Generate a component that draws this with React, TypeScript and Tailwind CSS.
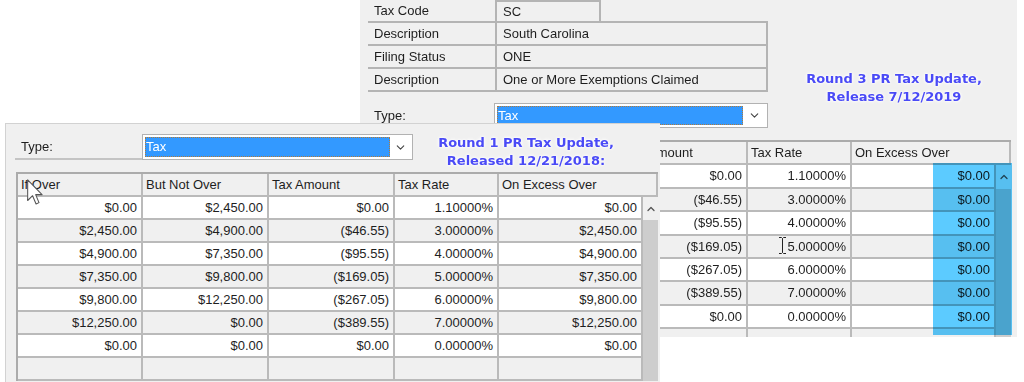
import { ChevronDown, ChevronUp } from "lucide-react";

const ui = "font-['Liberation_Sans',Arial,sans-serif] text-[13px] text-[#1e1e1e]";
const note =
  "font-['DejaVu_Sans',Verdana,sans-serif] text-[13px] font-bold leading-[18px] text-[#4a4af6] [text-shadow:0_0_2px_#fff,0_0_3px_#fff,0_0_4px_#fff]";

const headers = ["If Over", "But Not Over", "Tax Amount", "Tax Rate", "On Excess Over"];
const widths = ["w-[125px]", "w-[126px]", "w-[126px]", "w-[104px]", "w-[144px]"];

const round1 = [
  ["$0.00", "$2,450.00", "$0.00", "1.10000%", "$0.00"],
  ["$2,450.00", "$4,900.00", "($46.55)", "3.00000%", "$2,450.00"],
  ["$4,900.00", "$7,350.00", "($95.55)", "4.00000%", "$4,900.00"],
  ["$7,350.00", "$9,800.00", "($169.05)", "5.00000%", "$7,350.00"],
  ["$9,800.00", "$12,250.00", "($267.05)", "6.00000%", "$9,800.00"],
  ["$12,250.00", "$0.00", "($389.55)", "7.00000%", "$12,250.00"],
  ["$0.00", "$0.00", "$0.00", "0.00000%", "$0.00"],
  ["", "", "", "", ""],
];

// back window: the first two columns sit under the front window, so they stay blank
const round3 = round1.map((r) => (r[0] === "" ? r : ["", "", r[2], r[3], "$0.00"]));

const fields = [
  ["Tax Code", "SC"],
  ["Description", "South Carolina"],
  ["Filing Status", "ONE"],
  ["Description", "One or More Exemptions Claimed"],
];

function Dropdown({ box, field }: { box: string; field: string }) {
  return (
    <div className={`flex items-center border border-[#b2b2b2] bg-white p-[2px] ${box}`}>
      <div
        className={`flex h-full items-center bg-[#3399ff] pl-[1px] text-white outline-1 outline-dotted outline-offset-[-1px] outline-[#b07a3a] ${field}`}
      >
        Tax
      </div>
      <div className="flex flex-1 items-center justify-center">
        <ChevronDown size={13} strokeWidth={2} className="text-[#444]" />
      </div>
    </div>
  );
}

function Grid({
  data,
  heads,
  rowH,
  margin,
}: {
  data: string[][];
  heads: string[];
  rowH: string;
  margin: string;
}) {
  return (
    <div className={`flex w-[642px] flex-col border-l-2 border-t-2 border-[#ababab] ${margin}`}>
      <div className={`flex ${rowH}`}>
        {heads.map((h, i) => (
          <div
            key={i}
            className={`flex shrink-0 items-center border-b-2 border-r-2 border-[#bababa] bg-[#f0f0f0] pl-[3px] ${
              i === 4 ? "w-[159px]" : widths[i]
            }`}
          >
            {h}
          </div>
        ))}
      </div>
      <div className="flex">
        <div className="flex flex-col">
          {data.map((r, ri) => (
            <div key={ri} className={`flex ${rowH} ${ri % 2 === 0 ? "bg-white" : "bg-[#f0f0f0]"}`}>
              {r.map((c, ci) => (
                <div
                  key={ci}
                  className={`flex shrink-0 items-center justify-end border-b-2 border-r-2 border-[#bababa] pr-[4px] ${widths[ci]}`}
                >
                  {c}
                </div>
              ))}
            </div>
          ))}
        </div>
        <div className="flex w-[17px] flex-col">
          <div className={`flex items-center justify-center bg-[#f0f0f0] ${rowH}`}>
            <ChevronUp size={12} strokeWidth={2.6} className="text-[#555]" />
          </div>
          <div className="flex-1 bg-[#cdcdcd]" />
        </div>
      </div>
    </div>
  );
}

export default function App() {
  return (
    <div className={`relative h-[382px] w-[1024px] overflow-hidden bg-white ${ui}`}>
      {/* back window: round 3 */}
      <div className="absolute left-[360px] top-0 h-[337px] w-[657px] overflow-hidden bg-[#f0f0f0]">
        <div className="ml-[8px] flex w-[400px] flex-col">
          {fields.map(([label, value], i) => (
            <div key={i} className="flex h-[23px] border-b-2 border-[#b4b4b4]">
              <div className="flex w-[127px] items-center pl-[6px]">{label}</div>
              <div
                className={`flex items-center border-l-2 border-r-2 border-[#b4b4b4] pl-[6px] ${
                  i === 0 ? "w-[106px] border-t-2" : "w-[273px]"
                }`}
              >
                {value}
              </div>
            </div>
          ))}
        </div>
        <div className="ml-[8px] mt-[11px] flex h-[25px]">
          <div className="flex w-[126px] items-center border-b-2 border-[#c4c4c4] pl-[6px] pt-[2px]">Type:</div>
          <Dropdown box="w-[274px]" field="w-[246px]" />
        </div>
        <Grid data={round3} heads={["", "", "Tax Amount", "Tax Rate", "On Excess Over"]} rowH="h-[23.4px]" margin="ml-[9px] mt-[12px]" />

        <div className="absolute left-[573px] top-[163px] h-[172px] w-[79px] bg-[#5ccbff] mix-blend-multiply" />

        <svg className="absolute left-[418px] top-[237px]" width="9" height="17" viewBox="0 0 9 17">
          <path d="M1 0.5h2.5l1 1 1-1H8M4.5 1.5v14M1 16.5h2.5l1-1 1 1H8" fill="none" stroke="#222" strokeWidth="1" />
        </svg>

        <div className={`absolute left-[534px] top-[70px] -translate-x-1/2 whitespace-nowrap text-center ${note}`}>
          <div>Round 3 PR Tax Update,</div>
          <div>Release 7/12/2019</div>
        </div>
      </div>

      {/* front window: round 1 */}
      <div className="absolute left-[5px] top-[123px] h-[259px] w-[655px] overflow-hidden border-l border-t border-[#d2d2d2] bg-[#f0f0f0]">
        <div className="ml-[9px] mt-[10px] flex h-[26px]">
          <div className="flex w-[127px] items-center border-b-2 border-[#c4c4c4] pl-[6px] pt-[2px]">Type:</div>
          <Dropdown box="w-[271px]" field="w-[245px]" />
        </div>
        <Grid data={round1} heads={headers} rowH="h-[23px]" margin="ml-[10px] mt-[12px]" />

        <svg className="absolute left-[21px] top-[55px]" width="16" height="27" viewBox="0 0 12 20">
          <path d="M0.5 0.5V16L4.2 12.4L6.8 18.6L9 17.6L6.5 11.6H11.3Z" fill="#fff" stroke="#555" strokeWidth="0.8" strokeLinejoin="round" />
        </svg>

        <div className={`absolute left-[520px] top-[10px] -translate-x-1/2 whitespace-nowrap text-center ${note}`}>
          <div>Round 1 PR Tax Update,</div>
          <div>Released 12/21/2018:</div>
        </div>
      </div>
    </div>
  );
}
